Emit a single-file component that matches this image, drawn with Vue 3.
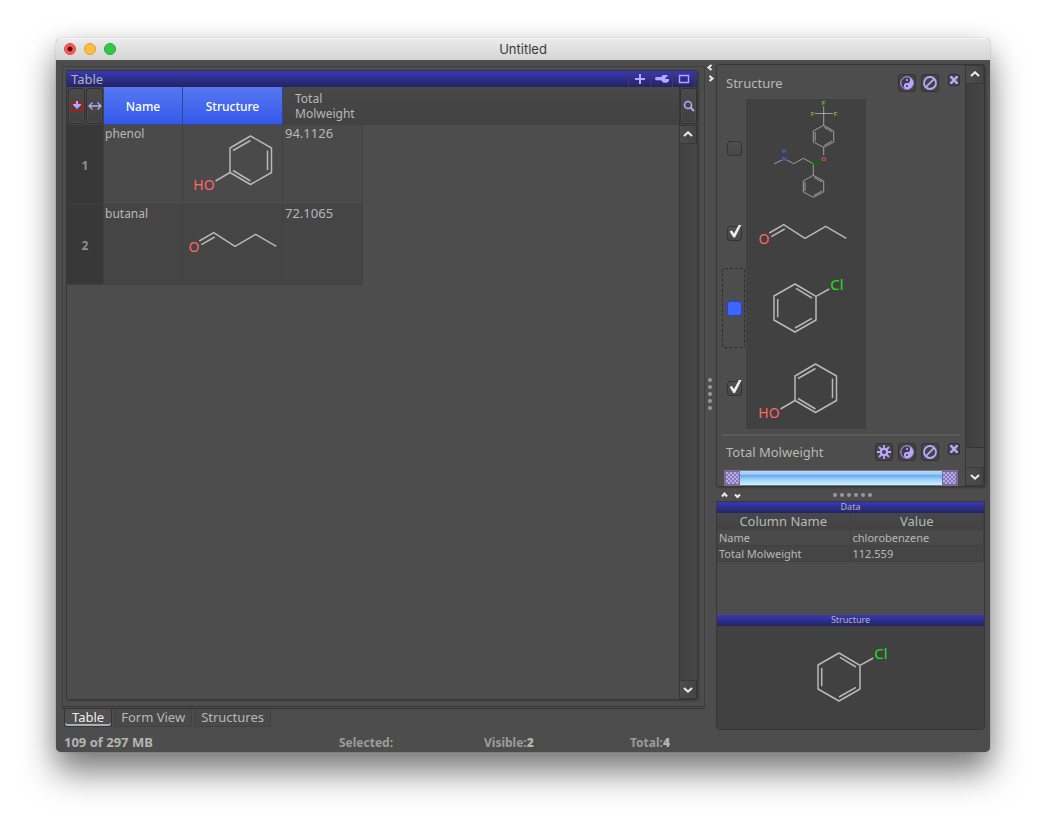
<script setup>
import { h, ref } from 'vue'

const BOND = '#b8b8b8'
const RED = '#ff6666'
const GREEN = '#1fe01f'

const molecules = {
  phenol: {
    title: 'phenol',
    size: 14,
    stroke: 1.5,
    path: 'M56.5 1 77.5 13V37.5L56.5 49.5 36 37.5V13ZM39 15.5 56.5 5.5M73.5 15.5V35M39 35.5 56.5 46M36 37.5 21.5 46',
    labels: [{ x: 10, y: 55, text: 'HO', color: RED }]
  },
  butanal: {
    title: 'butanal',
    size: 14,
    stroke: 1.5,
    path: 'M16.3 36 30.7 27.7 52 41.3 72.7 29.3 93.3 41.3M18.3 39.7 31.7 32',
    labels: [{ x: 11, y: 47, text: 'O', color: RED }]
  },
  chlorobenzene: {
    title: 'chlorobenzene',
    size: 15,
    stroke: 1.5,
    path: 'M49 16 70 28.3V52L49 64 28 52V28ZM50 20.3 66 30M49 60 66 50.3M31.7 31V49.3M70 28.3 83.3 21',
    labels: [{ x: 91, y: 22, text: 'Cl', color: GREEN }]
  },
  fluoxetine: {
    title: 'fluoxetine',
    size: 6,
    family: 'Liberation Sans, sans-serif',
    stroke: 0.8,
    path: 'M77.7 26.3V7M69 14.5H87M77.7 26.3 87.7 32V43L77.7 48.3 67.3 43V32ZM69.2 33V42M78.3 28.4 86 32.7M86 42 78.3 46.4M77.7 48.3V56M67.3 64.7 57.3 59.3 47.7 64.7 41 61M36 61 28.3 64.7M67.3 64.7V76.3M67.3 76.3 77.7 82V93L67.3 98.3 57.3 93V82ZM59 83V92M68 78.4 76 82.8M76 92 68 96.4',
    wedge: 'M67.5 61V65.5M69.5 61.5V65M71.5 61V64.5M73.5 60.5V63M66 63.5 75 61.5',
    labels: [
      { x: 77.7, y: 6, text: 'F', color: '#76b83a' },
      { x: 66.7, y: 17, text: 'F', color: '#76b83a' },
      { x: 89.7, y: 17, text: 'F', color: '#76b83a' },
      { x: 77.7, y: 61.5, text: 'O', color: '#e05555' },
      { x: 38.3, y: 61.5, text: 'N', color: '#4466ee' },
      { x: 38.3, y: 54, text: 'H', color: '#4466ee' }
    ]
  }
}

function Molecule(props) {
  const m = molecules[props.name]
  const [, , w, ht] = props.box.split(' ')
  return h('svg', { viewBox: props.box, width: w, height: ht, role: 'img', 'aria-label': m.title }, [
    h('path', { d: m.path, fill: 'none', stroke: BOND, 'stroke-width': m.stroke, 'stroke-linejoin': 'round' }),
    m.wedge ? h('path', { d: m.wedge, fill: 'none', stroke: '#0c6b0c', 'stroke-width': 1 }) : null,
    ...m.labels.map((l) =>
      h('text', { x: l.x, y: l.y, fill: l.color, 'font-size': m.size, 'font-family': m.family, 'font-weight': m.family ? 700 : 400, 'text-anchor': 'middle' }, l.text)
    )
  ])
}
Molecule.props = ['name', 'box']

const rows = [
  { name: 'phenol', box: '-11 -10 98 79', weight: '94.1126' },
  { name: 'butanal', box: '0 0 98 79', weight: '72.1065' }
]

const choices = ref([
  { name: 'fluoxetine', box: '0 0 120 99', checked: false, current: false },
  { name: 'butanal', box: '-7 1 120 70', checked: true, current: false },
  { name: 'chlorobenzene', box: '0 0 120 80', checked: false, current: true },
  { name: 'phenol', box: '-13 -15 120 81', checked: true, current: false }
])

const details = [
  ['Name', 'chlorobenzene'],
  ['Total Molweight', '112.559']
]

const filters = ['Structure', 'Total Molweight']
const tabs = ['Table', 'Form View', 'Structures']
const low = ref(0)
const high = ref(100)
</script>

<template>
  <div class="desktop">
    <div class="window">
      <header class="titlebar">
        <div class="lights">
          <button class="light close" aria-label="Close"></button>
          <button class="light minimise" aria-label="Minimise"></button>
          <button class="light zoom" aria-label="Zoom"></button>
        </div>
        <span class="title">Untitled</span>
      </header>

      <div class="body">
        <main class="left">
          <div class="pane">
            <section class="view">
              <div class="viewbar">
                <span class="viewname">Table</span>
                <button aria-label="Add">
                  <svg width="14" height="12" viewBox="0 0 14 12"><path d="M2 6H12M7 1V11" stroke="#b8a6ff" stroke-width="2" /></svg>
                </button>
                <button aria-label="Configure">
                  <svg width="16" height="12" viewBox="0 0 16 12"><path d="M1 5 2 4H7L9 2H13.5V3.5L11.5 4.5V6H15V8L13 9.8H9.5L7 7.2H2L1 6Z" fill="#b8a6ff" /></svg>
                </button>
                <button aria-label="Maximise">
                  <svg width="12" height="12" viewBox="0 0 12 12"><path d="M1.5 2V9.5H10.5V2M1 2.5H11" fill="none" stroke="#b8a6ff" stroke-width="1.4" /></svg>
                </button>
                <i class="edge"></i>
              </div>

              <div class="viewbody">
                <div class="sheet">
                  <table class="grid">
                    <thead>
                      <tr>
                        <th class="corner">
                          <div class="corner-buttons">
                            <button aria-label="Fit rows">
                              <svg width="14" height="14" viewBox="0 0 14 14"><rect x="1.5" y="4.5" width="11" height="7" fill="none" stroke="#f00000" /><path d="M6 2H8V5H11V6L7 10 3 6V5H6Z" fill="#b8a6ff" /></svg>
                            </button>
                            <button aria-label="Fit columns">
                              <svg width="14" height="14" viewBox="0 0 14 14"><path d="M1 7H13M4.5 3.5 1 7 4.5 10.5M9.5 3.5 13 7 9.5 10.5" fill="none" stroke="#b8a6ff" stroke-width="1.3" /></svg>
                            </button>
                          </div>
                        </th>
                        <th class="picked name">Name</th>
                        <th class="picked structure">Structure</th>
                        <th class="weight">Total<br />Molweight</th>
                      </tr>
                    </thead>
                    <tbody>
                      <tr v-for="(row, i) in rows" :key="row.name">
                        <th class="rownum">{{ i + 1 }}</th>
                        <td>{{ row.name }}</td>
                        <td class="drawing"><Molecule :name="row.name" :box="row.box" /></td>
                        <td class="number">{{ row.weight }}</td>
                      </tr>
                    </tbody>
                  </table>
                </div>
                <div class="scroll">
                  <button class="search" aria-label="Search">
                    <svg width="12" height="12" viewBox="0 0 12 12"><circle cx="5" cy="5" r="3.5" fill="none" stroke="#b8a6ff" stroke-width="1.6" /><path d="M7.5 7.5 11 11" stroke="#b8a6ff" stroke-width="2" /></svg>
                  </button>
                  <button class="step" aria-label="Scroll up">
                    <svg width="12" height="8" viewBox="0 0 12 8"><path d="M2 5 6 1.3 10 5" fill="none" stroke="#eee" stroke-width="2" /></svg>
                  </button>
                  <div class="track"></div>
                  <button class="step" aria-label="Scroll down">
                    <svg width="12" height="8" viewBox="0 0 12 8"><path d="M2 2 6 5.7 10 2" fill="none" stroke="#eee" stroke-width="2" /></svg>
                  </button>
                </div>
              </div>
            </section>
          </div>
          <nav class="tabs">
            <button v-for="(tab, i) in tabs" :key="tab" :class="{ active: i === 0 }">{{ tab }}</button>
          </nav>
        </main>

        <div class="divider">
          <svg width="10" height="20" viewBox="0 0 10 20"><path d="M6.5 2 3.5 4.5 6.5 7M4.5 13 7.5 15.5 4.5 18" fill="none" stroke="#eee" stroke-width="2" /></svg>
          <div class="dots"><i v-for="n in 5" :key="n"></i></div>
        </div>

        <aside class="right">
          <section class="filters">
            <div class="filterlist">
              <div v-for="(filter, f) in filters" :key="filter" class="filter">
                <div class="filterhead">
                  <h2>{{ filter }}</h2>
                  <button v-if="f === 1" class="tool" aria-label="Settings">
                    <svg width="16" height="16" viewBox="0 0 16 16"><path d="M8 1V15M1 8H15M3 3 13 13M13 3 3 13" stroke="#b8a6ff" stroke-width="1.8" /><circle cx="8" cy="8" r="4.3" fill="#b8a6ff" /><circle cx="8" cy="8" r="2" fill="#424242" /></svg>
                  </button>
                  <button class="tool" aria-label="Invert">
                    <svg width="16" height="16" viewBox="0 0 16 16"><circle cx="8" cy="8" r="6.2" fill="#3d3a4a" stroke="#b8a6ff" /><path d="M8 1.8A6.2 6.2 0 0 1 8 14.2 3.1 3.1 0 0 1 8 8 3.1 3.1 0 0 0 8 1.8Z" fill="#b8a6ff" /><circle cx="8" cy="5" r="1.1" fill="#b8a6ff" /><circle cx="8" cy="11" r="1.1" fill="#3d3a4a" /></svg>
                  </button>
                  <button class="tool" aria-label="Disable">
                    <svg width="16" height="16" viewBox="0 0 16 16"><circle cx="8" cy="8" r="6" fill="none" stroke="#b8a6ff" stroke-width="1.8" /><path d="M12.2 3.8 3.8 12.2" stroke="#b8a6ff" stroke-width="1.8" /></svg>
                  </button>
                  <button class="tool remove" aria-label="Remove">
                    <svg width="10" height="10" viewBox="0 0 10 10"><path d="M1 1H3L5 3.3 7 1H9V2.5L6.7 5 9 7.5V9H7L5 6.8 3 9H1V7.5L3.3 5 1 2.5Z" fill="#b8a6ff" /></svg>
                  </button>
                </div>

                <ul v-if="f === 0" class="choices">
                  <li v-for="choice in choices" :key="choice.name">
                    <label :class="{ current: choice.current }">
                      <input v-model="choice.checked" type="checkbox" :aria-label="choice.name" />
                    </label>
                    <Molecule class="choice" :name="choice.name" :box="choice.box" />
                  </li>
                </ul>
                <div v-else class="range">
                  <input v-model="low" type="range" min="0" max="100" aria-label="Minimum" />
                  <input v-model="high" type="range" min="0" max="100" aria-label="Maximum" />
                </div>
              </div>
            </div>
            <div class="scroll">
              <button class="step" aria-label="Scroll up">
                <svg width="12" height="8" viewBox="0 0 12 8"><path d="M2 5 6 1.3 10 5" fill="none" stroke="#eee" stroke-width="2" /></svg>
              </button>
              <div class="thumb"></div>
              <div class="rest"></div>
              <button class="step" aria-label="Scroll down">
                <svg width="12" height="8" viewBox="0 0 12 8"><path d="M2 2 6 5.7 10 2" fill="none" stroke="#eee" stroke-width="2" /></svg>
              </button>
            </div>
          </section>

          <div class="splitter">
            <svg width="22" height="10" viewBox="0 0 22 10"><path d="M2 6.5 4.5 3.5 7 6.5M15 4.5 17.5 7 20 4.5" fill="none" stroke="#eee" stroke-width="2" /></svg>
            <div class="dots"><i v-for="n in 6" :key="n"></i></div>
          </div>

          <section class="details">
            <h3>Data</h3>
            <table class="facts">
              <thead>
                <tr><th>Column Name</th><th>Value</th></tr>
              </thead>
              <tbody>
                <tr v-for="[key, value] in details" :key="key">
                  <td>{{ key }}</td>
                  <td>{{ value }}</td>
                </tr>
              </tbody>
            </table>
            <div class="blank"></div>
            <h3>Structure</h3>
            <div class="preview"><Molecule name="chlorobenzene" box="-73 -11 267 103" /></div>
          </section>
        </aside>
      </div>

      <footer class="status">
        <span class="memory">109 of 297 MB</span>
        <span>Selected:</span>
        <span>Visible:<b>2</b></span>
        <span>Total:<b>4</b></span>
      </footer>
    </div>
  </div>
</template>

<style>
body {
  background: #fff;
}
</style>

<style scoped>
* {
  box-sizing: border-box;
}

.desktop {
  display: flex;
  min-height: 100vh;
  padding: 38px 56px 74px;
  overflow: hidden;
  font-family: "Noto Sans", "Open Sans", sans-serif;
  font-size: 13px;
  color: #b8b8b8;
}

button {
  display: flex;
  align-items: center;
  justify-content: center;
  margin: 0;
  padding: 0;
  border: 0;
  background: none;
  color: inherit;
  font: inherit;
}

svg {
  display: block;
  flex: none;
}

h2,
h3,
ul {
  margin: 0;
  padding: 0;
  font-weight: 400;
  list-style: none;
}

table {
  border-spacing: 0;
  table-layout: fixed;
}

th,
td {
  padding: 0;
  font-weight: 400;
  text-align: left;
}

.window {
  display: flex;
  flex: 1;
  flex-direction: column;
  min-width: 0;
  border-radius: 5px;
  background: #4d4d4d;
  box-shadow: 0 0 1px rgba(0, 0, 0, 0.5), 0 20px 34px rgba(0, 0, 0, 0.5), 0 4px 24px rgba(0, 0, 0, 0.1);
}

.titlebar {
  display: grid;
  grid-template-columns: 1fr auto 1fr;
  align-items: center;
  height: 22px;
  padding: 0 8px;
  border-radius: 5px 5px 0 0;
  background: linear-gradient(#ececec, #d4d4d4);
  box-shadow: inset 0 1px #f6f6f6;
}

.lights {
  display: flex;
  gap: 8px;
}

.light {
  width: 12px;
  height: 12px;
  border: 1px solid #e0443e;
  border-radius: 50%;
  background: #fc5b57;
}

.close {
  background: radial-gradient(circle, #4d0000 0 2px, #fc5b57 3px);
}

.minimise {
  border-color: #dfa023;
  background: #fdbe41;
}

.zoom {
  border-color: #1dad2b;
  background: #34c84a;
}

.title {
  color: #3c3c3c;
  font-family: Inter, sans-serif;
}

.body {
  display: grid;
  flex: 1;
  grid-template-columns: minmax(0, 1fr) 11px 269px;
  padding: 0 5px 0 6px;
}

.left {
  display: flex;
  flex-direction: column;
  padding: 6px 0 3px;
}

.pane {
  display: flex;
  flex: 1;
  padding: 3px 6px 6px 3px;
  border: 1px solid #3e3e3e;
  border-bottom: 3px double #343434;
}

.view {
  display: flex;
  flex: 1;
  flex-direction: column;
  min-width: 0;
  border: 1px solid #363636;
  border-radius: 2px;
  box-shadow: 1px 1px 2px #3c3c3c;
}

.viewbar {
  display: flex;
  height: 16px;
  background: linear-gradient(#3838b4, #242462);
}

.viewname {
  flex: 1;
  padding-left: 4px;
  color: #b4b4bc;
  line-height: 16px;
}

.viewbar button {
  width: 22px;
  border-left: 1px solid #3e3e48;
}

.edge {
  width: 3px;
  border-left: 1px solid #3e3e48;
}

.viewbody {
  display: flex;
  flex: 1;
}

.sheet {
  flex: 1;
  background: linear-gradient(#484848, #424242) 0 0 / 100% 38px no-repeat;
}

.grid {
  width: 296px;
}

.grid thead th {
  height: 38px;
  line-height: 15px;
}

.corner {
  width: 37px;
}

.corner-buttons {
  display: flex;
  gap: 1px;
  height: 38px;
  padding: 1px;
}

.corner-buttons button,
.search {
  flex: 1;
  border: 1px solid #333;
  border-radius: 3px;
  background: linear-gradient(#4a4a4a, #404040);
  box-shadow: inset 0 0 0 1px #4b4b4b;
}

.grid .picked {
  padding-top: 2px;
  border-right: 1px solid #35448c;
  border-bottom: 1px solid #35448c;
  background: linear-gradient(#5778f2, #3459ea);
  color: #fff;
  font-size: 12px;
  font-weight: 500;
  text-align: center;
}

.grid .name {
  width: 79px;
}

.grid .structure {
  width: 100px;
}

.grid .weight {
  width: 80px;
  padding-left: 12px;
  font-size: 12px;
}

.grid tbody th,
.grid tbody td {
  height: 80px;
  border-right: 1px solid #414141;
  border-bottom: 1px solid #414141;
}

.grid tbody td {
  padding: 2px 2px 0 1px;
  background: #4a4a4a;
  font-size: 12px;
  line-height: 14px;
  vertical-align: top;
}

.grid tbody tr:nth-child(2) td {
  background: #454545;
}

.grid tbody .drawing {
  padding: 0;
}

.grid tbody .number {
  padding: 1px 0 0 2px;
  font-size: 13px;
}

.grid tbody .rownum {
  padding-top: 2px;
  background: #383838;
  color: #8f8f8f;
  font-size: 12px;
  font-weight: 700;
  text-align: center;
}

.scroll {
  display: flex;
  flex-direction: column;
  width: 18px;
  border-left: 1px solid #373737;
  background: #434343;
}

.search {
  flex: none;
  height: 36px;
  margin: 1px 0;
}

.step {
  height: 19px;
  border: 1px solid #393939;
  border-left: 0;
  background: linear-gradient(90deg, #4d4d4d, #444);
}

.track {
  flex: 1;
  background: linear-gradient(90deg, #414141, #484848);
}

.tabs {
  display: flex;
  gap: 2px;
  padding-left: 2px;
}

.tabs button {
  height: 18px;
  padding: 0 6px;
  border: 1px solid #414141;
  border-top: 0;
  border-radius: 0 0 3px 3px;
  background: #494949;
  line-height: 17px;
}

.tabs .active {
  padding: 0 7px;
  border-color: #353535;
  background: #505050;
  box-shadow: inset 0 -2px #a9b0b5;
  color: #eee;
}

.divider {
  display: flex;
  position: relative;
  flex-direction: column;
  align-items: center;
  justify-content: center;
  padding: 0 2px 2px 0;
}

.divider svg {
  position: absolute;
  top: 3px;
  left: 0;
}

.dots {
  display: flex;
  gap: 3px;
}

.divider .dots {
  flex-direction: column;
}

.dots i {
  width: 4px;
  height: 4px;
  border-radius: 50%;
  background: #999;
}

.right {
  display: flex;
  flex-direction: column;
  padding-top: 4px;
}

.filters {
  display: flex;
  flex: 1;
  border: 1px solid #363636;
  border-radius: 3px;
  box-shadow: 1px 1px 2px #3a3a3a;
}

.filterlist {
  flex: 1;
  padding: 0 5px;
}

.filter + .filter {
  border-top: 2px solid #5a5a5a;
}

.filterhead {
  display: flex;
  gap: 5px;
  align-items: center;
  height: 34px;
  padding: 2px 0 0 4px;
}

.filter:last-child .filterhead {
  padding: 0 0 2px 4px;
}

h2 {
  flex: 1;
  font-size: 13px;
}

.tool {
  width: 18px;
  height: 18px;
  border: 1px solid #333;
  border-radius: 3px;
  background: #444;
}

.remove {
  width: 12px;
  height: 12px;
  margin: 0 0 6px 4px;
}

.choices {
  margin-bottom: 5px;
}

.choices li {
  display: flex;
}

.choices label {
  display: flex;
  align-items: center;
  justify-content: center;
  width: 23px;
  margin-right: 1px;
  padding-left: 1px;
  border: 1px dashed transparent;
  border-radius: 3px;
}

.choices .current {
  border-color: #2d2d2d;
}

.choice {
  background: #414141;
}

input[type="checkbox"] {
  appearance: none;
  position: relative;
  width: 15px;
  height: 15px;
  margin: 0;
  border: 1px solid #343434;
  border-radius: 3px;
  background: linear-gradient(#505050, #474747);
}

.current input[type="checkbox"] {
  border-color: #2342cc;
  background: #3d68ff;
}

input[type="checkbox"]:checked::after {
  content: "";
  position: absolute;
  top: -2px;
  left: 2px;
  width: 12px;
  height: 13px;
  background: #eee;
  clip-path: polygon(0 52%, 20% 46%, 38% 70%, 78% 0, 100% 0, 46% 100%, 32% 100%);
}

.range {
  position: relative;
  height: 16px;
  margin: 0 2px;
  border: 1px solid #777;
  background: linear-gradient(#b9dcfa, #8cc3f8 30%, #6aa9ec 31%, #9cd0fb 60%, #cdf2ff);
}

.range input {
  appearance: none;
  position: absolute;
  inset: 0;
  width: 100%;
  height: 14px;
  margin: 0;
  background: none;
  pointer-events: none;
}

.range input::-webkit-slider-thumb {
  appearance: none;
  width: 15px;
  height: 14px;
  border: 1px solid #7668a8;
  background: repeating-conic-gradient(#8577b8 0 25%, #b9aae6 0 50%) 0 0 / 4px 4px;
  pointer-events: auto;
}

.filters .scroll {
  width: 19px;
}

.thumb {
  flex: 1;
  background: linear-gradient(90deg, #3e3e3e, #464646);
}

.rest {
  height: 20px;
  border-top: 1px solid #343434;
  background: #4a4a4a;
}

.splitter {
  display: flex;
  position: relative;
  align-items: center;
  justify-content: center;
  height: 14px;
  padding: 2px 0 0 3px;
}

.splitter svg {
  position: absolute;
  top: 3px;
  left: 4px;
}

.details {
  border: 1px solid #373737;
  border-radius: 0 0 4px 4px;
}

h3 {
  height: 11px;
  background: linear-gradient(#3838b8, #242462);
  color: #b4b4bc;
  font-size: 9px;
  line-height: 10px;
  text-align: center;
}

.facts {
  width: 100%;
}

.facts th {
  height: 17px;
  padding-bottom: 1px;
  border-right: 1px solid #404040;
  background: linear-gradient(#484848, #424242);
  line-height: 15px;
  text-align: center;
}

.facts td {
  height: 16px;
  padding-left: 2px;
  border-right: 1px solid #414141;
  border-bottom: 1px solid #414141;
  background: #4a4a4a;
  font-size: 11px;
  line-height: 15px;
}

.facts tr:nth-child(2) td {
  background: #454545;
}

.blank {
  height: 53px;
}

.preview {
  display: flex;
  justify-content: center;
  overflow: hidden;
  border-radius: 0 0 4px 4px;
  background: #414141;
}

.status {
  display: grid;
  grid-template-columns: 275fr 145fr 146fr 360fr;
  height: 22px;
  padding-left: 8px;
  color: #9c9c9c;
  font-size: 12px;
  font-weight: 700;
  line-height: 26px;
}

.status b,
.memory {
  color: #b4b4b4;
}

.memory {
  font-size: 13px;
  line-height: 24px;
}
</style>
